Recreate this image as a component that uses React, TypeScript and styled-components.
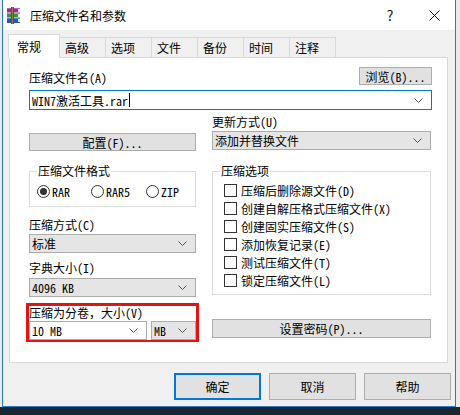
import React from 'react';
import styled, { createGlobalStyle } from 'styled-components';

const uiFont = `"Noto Sans CJK SC", sans-serif`;
const songFont = `"Noto Sans Mono CJK SC", "Liberation Mono", "Noto Sans CJK SC", monospace`;

const GlobalStyle = createGlobalStyle`
  html, body {
    margin: 0;
    padding: 0;
    background: #e9e9e9;
  }
  * {
    box-sizing: border-box;
  }
`;

const Chevron: React.FC = () => (
  <svg width="9" height="5" viewBox="0 0 9 5">
    <polyline points="0.5,0.5 4.5,4.5 8.5,0.5" fill="none" stroke="#555" strokeWidth="1" />
  </svg>
);

const RarIcon: React.FC = () => (
  <svg width="16" height="17" viewBox="0 0 16 17">
    <rect x="1" y="1" width="13" height="4.5" fill="#9a2d8f" />
    <rect x="1" y="1" width="13" height="1" fill="#c45bb6" />
    <rect x="12" y="2" width="2" height="3" fill="#f1e6f0" />
    <rect x="1" y="6" width="13" height="4.5" fill="#2f9a3c" />
    <rect x="1" y="6" width="13" height="1" fill="#6cc26f" />
    <rect x="12" y="7" width="2" height="3" fill="#e8f3e6" />
    <rect x="1" y="11" width="13" height="5" fill="#2756b5" />
    <rect x="1" y="11" width="13" height="1" fill="#5f86d6" />
    <rect x="12" y="12" width="2" height="3" fill="#e6ecf7" />
    <rect x="5" y="0" width="3" height="17" fill="#6b4a25" />
    <rect x="6" y="0" width="1" height="17" fill="#a67b43" />
  </svg>
);

const CloseGlyph: React.FC = () => (
  <svg width="11" height="11" viewBox="0 0 11 11">
    <path d="M0.5 0.5 L10.5 10.5 M10.5 0.5 L0.5 10.5" stroke="#111" strokeWidth="1" />
  </svg>
);

export default function App() {
  return (
    <>
      <GlobalStyle />
      <Screen>
        <Window>
          <TitleBar>
            <RarIcon />
            <Title>压缩文件名和参数</Title>
            <TitleButtons>
              <HelpMark>?</HelpMark>
              <CloseBox>
                <CloseGlyph />
              </CloseBox>
            </TitleButtons>
          </TitleBar>

          <Tabs>
            <Tab $active>常规</Tab>
            <Tab>高级</Tab>
            <Tab>选项</Tab>
            <Tab>文件</Tab>
            <Tab>备份</Tab>
            <Tab>时间</Tab>
            <Tab>注释</Tab>
          </Tabs>

          <Panel>
            <NameRow>
              <Label>压缩文件名(A)</Label>
              <Button $width={73}>浏览(B)...</Button>
            </NameRow>
            <Combo $editable $focused $height={20} $top={5}>
              <ComboText>
                WIN7激活工具.rar<Caret />
              </ComboText>
              <Chevron />
            </Combo>

            <Columns>
              <Column>
                <Button $top={23}>配置(F)...</Button>

                <Group $top={13}>
                  <Legend>压缩文件格式</Legend>
                  <RadioRow>
                    <RadioItem $width={54}>
                      <Radio $checked />
                      RAR
                    </RadioItem>
                    <RadioItem $width={55}>
                      <Radio />
                      RAR5
                    </RadioItem>
                    <RadioItem>
                      <Radio />
                      ZIP
                    </RadioItem>
                  </RadioRow>
                </Group>

                <Label $top={11}>压缩方式(C)</Label>
                <Combo $top={2}>
                  <ComboText>标准</ComboText>
                  <Chevron />
                </Combo>

                <Label $top={8}>字典大小(I)</Label>
                <Combo $top={3}>
                  <ComboText>4096 KB</ComboText>
                  <Chevron />
                </Combo>

                <VolumeBox>
                  <Label>压缩为分卷，大小(V)</Label>
                  <VolumeRow>
                    <Combo $editable $grow>
                      <ComboText>10 MB</ComboText>
                      <Chevron />
                    </Combo>
                    <Combo $fixed={45}>
                      <ComboText>MB</ComboText>
                      <Chevron />
                    </Combo>
                  </VolumeRow>
                </VolumeBox>
              </Column>

              <Column>
                <Label $top={5}>更新方式(U)</Label>
                <Combo $top={2}>
                  <ComboText>添加并替换文件</ComboText>
                  <Chevron />
                </Combo>

                <Group $top={14} $height={131}>
                  <Legend>压缩选项</Legend>
                  <CheckList>
                    <CheckItem>
                      <CheckBox />
                      压缩后删除源文件(D)
                    </CheckItem>
                    <CheckItem>
                      <CheckBox />
                      创建自解压格式压缩文件(X)
                    </CheckItem>
                    <CheckItem>
                      <CheckBox />
                      创建固实压缩文件(S)
                    </CheckItem>
                    <CheckItem>
                      <CheckBox />
                      添加恢复记录(E)
                    </CheckItem>
                    <CheckItem>
                      <CheckBox />
                      测试压缩文件(T)
                    </CheckItem>
                    <CheckItem>
                      <CheckBox />
                      锁定压缩文件(L)
                    </CheckItem>
                  </CheckList>
                </Group>

                <Button $top={24} $height={19}>设置密码(P)...</Button>
              </Column>
            </Columns>
          </Panel>

          <Footer>
            <DialogButton $default>确定</DialogButton>
            <DialogButton>取消</DialogButton>
            <DialogButton>帮助</DialogButton>
          </Footer>
        </Window>
        <Taskbar />
      </Screen>
    </>
  );
}

const Screen = styled.div`
  width: 460px;
  height: 415px;
  display: flex;
  flex-direction: column;
  overflow: hidden;
`;

const Window = styled.div`
  width: 454px;
  height: 407px;
  margin-left: 2px;
  background: #f0f0f0;
  border: 1px solid #2a78c8;
  border-top: none;
  display: flex;
  flex-direction: column;
`;

const Taskbar = styled.div`
  flex: 1;
  background: #1b2633;
`;

const TitleBar = styled.div`
  height: 30px;
  background: #ffffff;
  display: flex;
  align-items: center;
  padding-left: 3px;
  gap: 8px;
`;

const Title = styled.span`
  font-family: ${uiFont};
  font-size: 12px;
  color: #000;
`;

const TitleButtons = styled.div`
  margin-left: auto;
  display: flex;
  align-items: center;
  height: 100%;
`;

const HelpMark = styled.span`
  width: 46px;
  text-align: center;
  font-family: ${uiFont};
  font-size: 14px;
  color: #111;
`;

const CloseBox = styled.span`
  width: 42px;
  height: 100%;
  display: flex;
  align-items: center;
  justify-content: center;
`;

const Tabs = styled.div`
  display: flex;
  align-items: flex-end;
  height: 28px;
  padding-left: 6px;
  margin-bottom: -1px;
  position: relative;
  z-index: 1;
`;

const Tab = styled.div<{ $active?: boolean }>`
  width: ${({ $active }) => ($active ? 52 : 47)}px;
  height: ${({ $active }) => ($active ? 24 : 21)}px;
  padding-left: ${({ $active }) => ($active ? 8 : 5)}px;
  margin-left: -1px;
  display: flex;
  align-items: center;
  font-family: ${uiFont};
  font-size: 12px;
  color: #000;
  background: ${({ $active }) => ($active ? '#ffffff' : '#f0f0f0')};
  border: 1px solid #d9d9d9;
  border-bottom: ${({ $active }) => ($active ? '1px solid #ffffff' : '1px solid #d9d9d9')};
`;

const Panel = styled.div`
  margin-left: 6px;
  width: 439px;
  height: 306px;
  background: #ffffff;
  border: 1px solid #d9d9d9;
  padding: 9px 15px 0 19px;
  display: flex;
  flex-direction: column;
`;

const NameRow = styled.div`
  display: flex;
  justify-content: space-between;
  align-items: flex-end;
`;

const Label = styled.div<{ $top?: number }>`
  margin-top: ${({ $top }) => $top ?? 0}px;
  font-family: ${songFont};
  font-size: 12px;
  line-height: 14px;
  color: #000;
  white-space: nowrap;
`;

const Button = styled.div<{ $width?: number; $height?: number; $top?: number }>`
  width: ${({ $width }) => ($width ? `${$width}px` : 'auto')};
  height: ${({ $height }) => $height ?? 18}px;
  margin-top: ${({ $top }) => $top ?? 0}px;
  background: #e1e1e1;
  border: 1px solid #adadad;
  display: flex;
  align-items: center;
  justify-content: center;
  font-family: ${songFont};
  font-size: 12px;
  color: #000;
  white-space: nowrap;
`;

const Combo = styled.div<{
  $editable?: boolean;
  $focused?: boolean;
  $height?: number;
  $top?: number;
  $grow?: boolean;
  $fixed?: number;
}>`
  height: ${({ $height }) => $height ?? 19}px;
  margin-top: ${({ $top }) => $top ?? 0}px;
  flex: ${({ $grow, $fixed }) => ($grow ? '1' : $fixed ? `0 0 ${$fixed}px` : 'none')};
  background: ${({ $editable }) => ($editable ? '#ffffff' : '#e5e5e5')};
  border: 1px solid ${({ $focused }) => ($focused ? '#0078d7' : '#acacac')};
  display: flex;
  align-items: center;
  justify-content: space-between;
  padding: 0 8px 0 2px;
`;

const ComboText = styled.span`
  display: flex;
  align-items: center;
  font-family: ${songFont};
  font-size: 12px;
  color: #000;
  white-space: nowrap;
`;

const Caret = styled.span`
  width: 1px;
  height: 14px;
  background: #000;
  margin-left: 1px;
`;

const Columns = styled.div`
  display: grid;
  grid-template-columns: 167px 219px;
  column-gap: 16px;
`;

const Column = styled.div`
  display: flex;
  flex-direction: column;
`;

const Group = styled.fieldset<{ $top?: number; $height?: number }>`
  margin: ${({ $top }) => $top ?? 0}px 0 0 0;
  padding: 0 0 0 7px;
  height: ${({ $height }) => ($height ? `${$height}px` : 'auto')};
  border: 1px solid #dcdcdc;
  min-width: 0;
`;

const Legend = styled.legend`
  padding: 0 1px;
  margin-left: 0;
  font-family: ${songFont};
  font-size: 12px;
  line-height: 14px;
  color: #000;
`;

const RadioRow = styled.div`
  display: flex;
  align-items: center;
  height: 28px;
  padding-bottom: 2px;
`;

const RadioItem = styled.label<{ $width?: number }>`
  width: ${({ $width }) => ($width ? `${$width}px` : 'auto')};
  display: flex;
  align-items: center;
  gap: 2px;
  font-family: ${songFont};
  font-size: 12px;
  color: #000;
`;

const Radio = styled.span<{ $checked?: boolean }>`
  width: 13px;
  height: 13px;
  border-radius: 50%;
  border: 1px solid #333;
  background: #fff;
  display: flex;
  align-items: center;
  justify-content: center;
  &::after {
    content: '';
    width: 7px;
    height: 7px;
    border-radius: 50%;
    background: ${({ $checked }) => ($checked ? '#333' : 'transparent')};
  }
`;

const CheckList = styled.div`
  display: flex;
  flex-direction: column;
  padding: 3px 0 0 4px;
`;

const CheckItem = styled.label`
  height: 18px;
  display: flex;
  align-items: center;
  gap: 4px;
  font-family: ${songFont};
  font-size: 12px;
  color: #000;
  white-space: nowrap;
`;

const CheckBox = styled.span`
  width: 13px;
  height: 13px;
  border: 1px solid #333;
  background: #fff;
`;

const VolumeBox = styled.div`
  margin: 6px -3px 0 -3px;
  border: 3px solid #e21313;
  border-bottom-width: 2px;
  display: flex;
  flex-direction: column;
  gap: 1px;
`;

const VolumeRow = styled.div`
  display: flex;
  gap: 4px;
`;

const Footer = styled.div`
  display: flex;
  justify-content: flex-end;
  gap: 8px;
  padding: 10px 4px 0 0;
`;

const DialogButton = styled.div<{ $default?: boolean }>`
  width: 87px;
  height: 27px;
  background: #e1e1e1;
  border: ${({ $default }) => ($default ? '2px solid #0078d7' : '1px solid #adadad')};
  display: flex;
  align-items: center;
  justify-content: center;
  font-family: ${uiFont};
  font-size: 12px;
  color: #000;
`;
